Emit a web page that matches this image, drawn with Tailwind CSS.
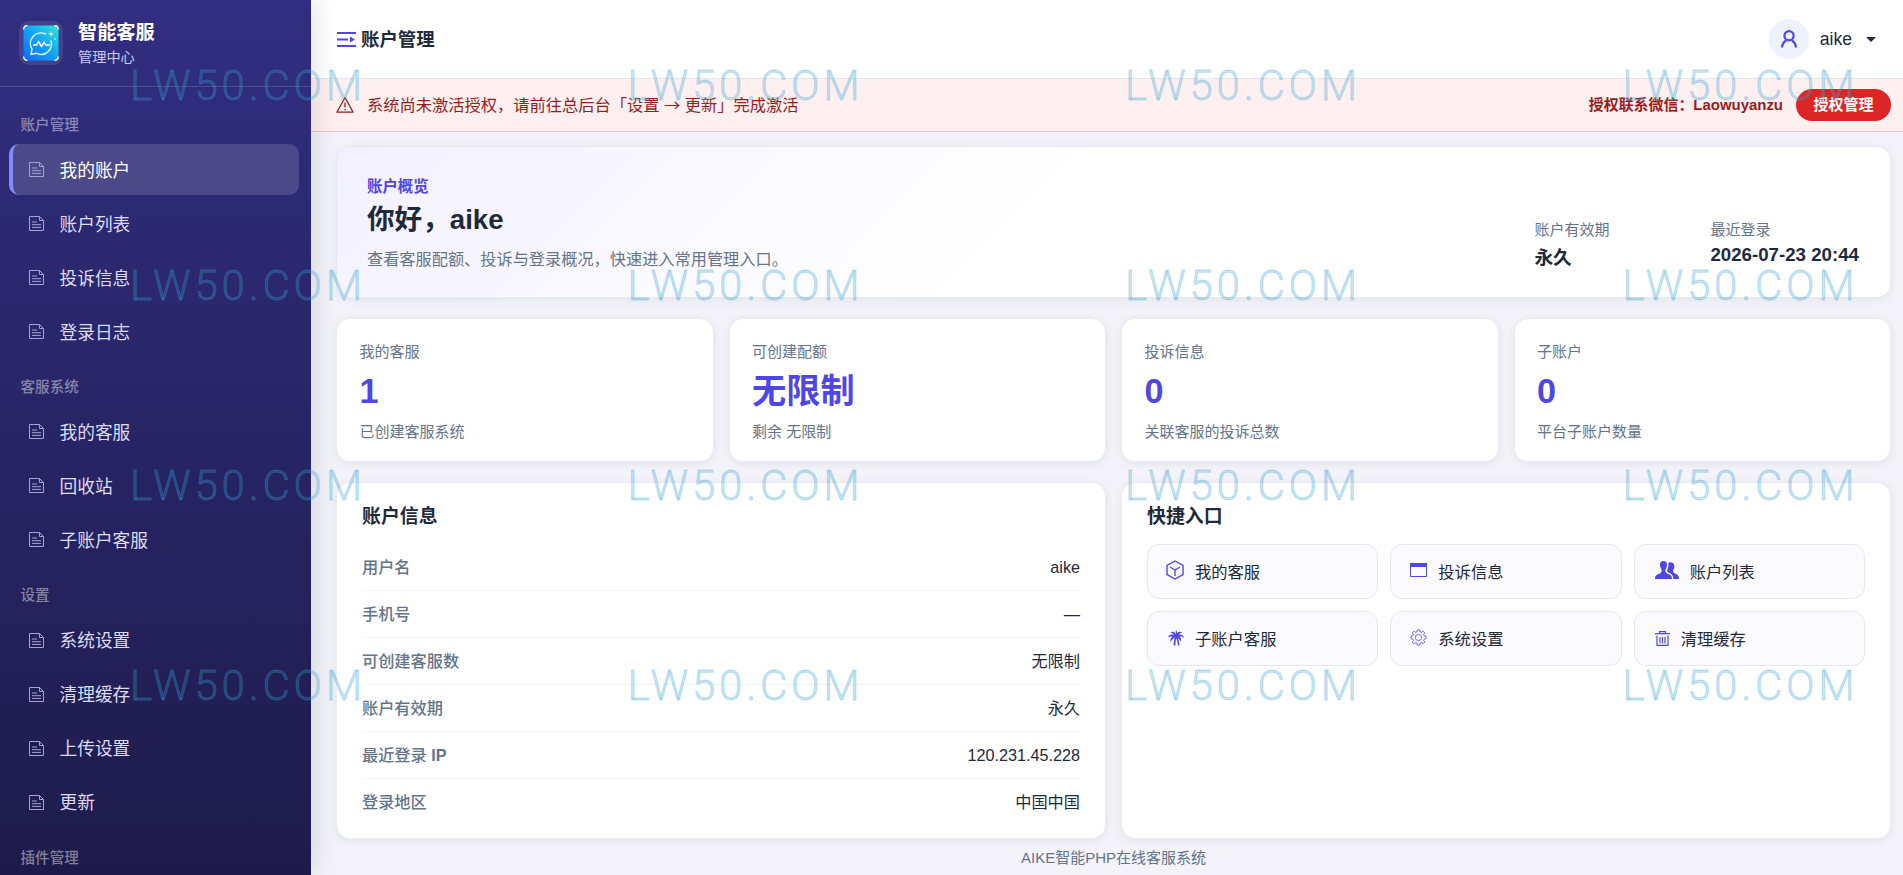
<!DOCTYPE html>
<html lang="zh-CN">
<head>
	<meta charset="UTF-8" />
	<title>账户管理</title>
	<script src="https://cdn.jsdelivr.net/npm/@tailwindcss/browser@4"></script>
</head>
<body class="relative flex h-[875px] w-[1903px] overflow-hidden bg-[#f3f3f9] font-['Liberation_Sans','Noto_Sans_CJK_SC',sans-serif] text-[16px] leading-6 text-[#1e293b]">

	<!-- Icons used more than once -->
	<svg class="hidden">
		<symbol id="doc" viewBox="0 0 15 15">
			<path d="M10.500.500H.5v14h14v-10zM10.500.500v4h4M3 6h5M3 8.700h9M3 11.400h9" fill="none" stroke="currentColor" />
		</symbol>
	</svg>

	<!-- Sidebar -->
	<aside class="relative z-10 h-full w-[311px] shrink-0 bg-gradient-to-b from-[#312e81] to-[#1e1b4b] shadow-[4px_0_24px_rgba(15,23,42,0.12)]">
		<div class="flex h-[87px] items-center gap-[15px] border-b border-white/15 pl-[19px]">
			<div class="flex size-11 items-center justify-center rounded-[10px] bg-white/10">
				<svg class="size-9" viewBox="0 0 36 36">
					<defs>
						<linearGradient id="logo" x1="0" y1="1" x2="1" y2="0">
							<stop offset="0" stop-color="#1268f5" />
							<stop offset="0.5" stop-color="#10a3f5" />
							<stop offset="1" stop-color="#2ce8d8" />
						</linearGradient>
					</defs>
					<rect x="0.5" y="0.5" width="35" height="35" rx="4.500" fill="url(#logo)" />
					<path d="M.7 4.500Q.7.7 4.500.7M31.500.7q3.800 0 3.800 3.800M35.300 31.500q0 3.800-3.800 3.800M4.500 35.300Q.7 35.300.7 31.500" fill="none" stroke="#fff" stroke-width="1.300" />
					<path d="M22.500 9A10.500 10.500 0 0 0 9 24l-1 5.500 5-1.300A10.500 10.500 0 0 0 28 16" fill="none" stroke="#d9f6ff" stroke-width="1.500" stroke-linecap="round" stroke-linejoin="round" />
					<path d="M10.500 20h3l2-3.500 3 5 2.500-4.500 1.500 3h4" fill="none" stroke="#fff" stroke-width="1.500" stroke-linecap="round" stroke-linejoin="round" />
					<path d="M28 6l.7 2.300L31 9l-2.300.7L28 12l-.7-2.300L25 9l2.300-.7z" fill="#fff" />
					<circle cx="32" cy="14" r=".8" fill="#fff" />
				</svg>
			</div>
			<div class="pt-[3px]">
				<p class="text-[19.200px] font-bold leading-6 text-white">智能客服</p>
				<p class="text-[14.200px] leading-6 text-[#c7c9f0]">管理中心</p>
			</div>
		</div>

		<nav id="menu" class="pl-[9px] pr-3"></nav>
	</aside>

	<!-- Main -->
	<main class="flex min-w-0 flex-1 flex-col">
		<header class="flex h-[79px] shrink-0 items-center justify-between border-b border-[#e2e8f0] bg-white pl-[26px] pr-[27px]">
			<div class="flex items-center gap-[5px]">
				<svg class="h-[17px] w-[19px] text-[#4f46e5]" viewBox="0 0 19 17">
					<path d="M0 2h19M0 8.500h11M0 15h19" stroke="currentColor" stroke-width="2.200" />
					<path d="M13 5.500v6l5-3z" fill="currentColor" />
				</svg>
				<h1 class="pt-0.5 text-[18.400px] font-bold">账户管理</h1>
			</div>
			<div class="flex items-center">
				<span class="flex size-10 items-center justify-center rounded-full bg-[#eef2ff]">
					<svg class="h-[18px] w-4 text-[#4f46e5]" viewBox="0 0 16 18" fill="none" stroke="currentColor" stroke-width="2.200">
						<circle cx="8" cy="5.800" r="4.600" />
						<path d="M1.100 17.500c0-3 1.600-5.500 4-7M14.900 17.500c0-3-1.600-5.500-4-7" />
					</svg>
				</span>
				<span class="ml-[11px] text-[17.600px]">aike</span>
				<span class="ml-[14px] border-x-[5px] border-t-[5px] border-x-transparent border-t-[#1e293b]"></span>
			</div>
		</header>

		<div class="flex h-[53px] shrink-0 items-center border-b border-[#f3c2c8] bg-[#fef0f0] pl-[25px] pr-3">
			<svg class="size-[18px] text-[#991b1b]" viewBox="0 0 18 18" fill="none" stroke="currentColor" stroke-width="1.300" stroke-linejoin="round">
				<path d="M9 1.500L.9 16.200h16.200zM9 6.500v5M9 13v1.300" />
			</svg>
			<p class="ml-[13px] text-[16.250px] leading-6 text-[#991b1b]">系统尚未激活授权，请前往总后台「设置 <span class="font-['Noto_Sans_CJK_SC'] leading-none">→</span> 更新」完成激活</p>
			<p class="ml-auto text-[14.950px] font-bold text-[#991b1b]">授权联系微信：Laowuyanzu</p>
			<button class="ml-[13px] h-8 w-[95px] rounded-full bg-[#dc2626] text-[15px] font-bold text-white">授权管理</button>
		</div>

		<div class="flex flex-1 flex-col pl-[25px] pr-3 pt-[14px]">
			<!-- Overview -->
			<section class="flex h-[152px] items-end justify-between rounded-[14px] border border-[#e8e8f1] bg-linear-135 from-[#f3f1ff] to-white to-45% pb-[25px] pl-[30px] pr-[31px] shadow-[0_2px_10px_rgba(15,23,42,0.07)]">
				<div>
					<p class="text-[15.400px] font-bold leading-6 text-[#4f46e5]">账户概览</p>
					<h2 class="pt-0.5 text-[27.600px] font-bold leading-[38px]">你好，aike</h2>
					<p class="pb-px pt-2 text-[16.200px] leading-6 text-[#64748b]">查看客服配额、投诉与登录概况，快速进入常用管理入口。</p>
				</div>
				<div class="flex gap-[101px]">
					<div>
						<p class="text-[15px] leading-6 text-[#64748b]">账户有效期</p>
						<p class="pt-px text-[18.700px] font-bold leading-[29px]">永久</p>
					</div>
					<div>
						<p class="text-[15px] leading-6 text-[#64748b]">最近登录</p>
						<p class="text-[18.700px] font-bold leading-[26px]">2026-07-23 20:44</p>
					</div>
				</div>
			</section>

			<!-- Counters -->
			<section id="counters" class="mt-5 grid grid-cols-4 gap-[15px]"></section>

			<section class="mt-5 grid h-[357px] grid-cols-2 gap-[15px]">
				<div class="rounded-[14px] border border-[#ececf3] bg-white px-[25px] pt-5 shadow-[0_2px_10px_rgba(15,23,42,0.07)]">
					<h3 class="text-[18.900px] font-bold leading-7">账户信息</h3>
					<dl id="info" class="pt-[13px]"></dl>
				</div>
				<div class="rounded-[14px] border border-[#ececf3] bg-white px-[25px] pt-5 shadow-[0_2px_10px_rgba(15,23,42,0.07)]">
					<h3 class="text-[18.900px] font-bold leading-7">快捷入口</h3>
					<div class="grid grid-cols-3 gap-x-3 gap-y-3 pt-[13px] text-[16.300px]">
						<a class="flex h-[55px] items-center gap-[11px] rounded-xl border border-[#e6e8f0] bg-[#fbfbff] pl-[18px]">
							<svg class="mb-[3px] h-5 w-[18px] text-[#4f46e5]" viewBox="0 0 18 20" fill="none" stroke="currentColor" stroke-width="1.400">
								<path d="M9 1l8 4.500v9L9 19l-8-4.500v-9zM4 7l5 3 5-3M9 10v6" />
							</svg>
							我的客服
						</a>
						<a class="flex h-[55px] items-center gap-[11px] rounded-xl border border-[#e6e8f0] bg-[#fbfbff] pl-[19px]">
							<svg class="mb-[3px] h-[14px] w-[17px] text-[#4f46e5]" viewBox="0 0 17 14">
								<path d="M0 0h17v4H0z" fill="currentColor" />
								<path d="M.5 4v9.500h16V4" fill="none" stroke="currentColor" />
							</svg>
							投诉信息
						</a>
						<a class="flex h-[55px] items-center gap-3 rounded-xl border border-[#e6e8f0] bg-[#fbfbff] pl-5">
							<svg class="mb-1 h-[18px] w-6 text-[#4f46e5]" viewBox="0 0 24 18" fill="currentColor">
								<path d="M8.500 0C6 0 4.800 1.800 5 4.300c.2 2.400 1.500 3.700 1.700 5.200.1 1.700-1 2.500-2.700 3.200C1.500 13.800 0 14.500 0 18h17c0-3.500-1.500-4.200-4-5.300-1.700-.7-2.800-1.500-2.700-3.200.2-1.500 1.500-2.800 1.700-5.200C12.200 1.800 11 0 8.500 0z" />
								<path d="M13.200 2c.6 1.800.2 4.500-.9 6.700-.6 1.200-.1 2.300 1.700 3 2.800 1.300 4.200 2.800 4.400 6.300H24c0-3.300-1.300-4.200-3.500-5.200-1.500-.7-2.800-1.500-2.500-3 .3-1.400 1.300-2.300 1.400-4.600C19.500 1.700 15.500.4 13.200 2z" />
							</svg>
							<span class="-ml-px">账户列表</span>
						</a>
						<a class="flex h-[55px] items-center gap-[11px] rounded-xl border border-[#e6e8f0] bg-[#fbfbff] pl-[20px]">
							<svg class="mb-0.5 size-4 text-[#4f46e5]" viewBox="0 0 16 16" fill="currentColor">
								<path d="M8 4.500C6.800 2 4.500 1 2.500 2.700 4.300 2.800 5.300 3.700 5.800 4.900 3 4 .7 5 0 7.500c1.500-1 3-1.300 4.800-.9C2.800 7.800 2 9.500 2.600 12 3.700 10 5 8.700 6.900 7.700 5.900 10 5.500 12.500 5.700 15.500h1.800C7.300 13 7.700 10.500 8.300 8.600c.9 2 1.500 4.400 1.500 6.900h1.600c.1-2.500-.6-5-1.700-7.200 1.500.9 2.600 2 3.300 3.700C13.500 9.500 13 7.800 11.400 6.600c1.600-.1 3 .2 4.600 1.400-.5-2.500-2.500-4-5.200-3.500.6-1 1.600-1.500 3.500-1.500C12.500 1.200 9.700 1.500 9 3.600L8.800.5 7.600 1z" />
							</svg>
							子账户客服
						</a>
						<a class="flex h-[55px] items-center gap-[11px] rounded-xl border border-[#e6e8f0] bg-[#fbfbff] pl-[19px]">
							<svg class="mb-0.5 size-[17px] text-[#4f46e5]/90" viewBox="0 0 18 19" fill="none" stroke="currentColor">
								<path d="M7.600 1h2.800l.5 2.300 1.200.5 2-1.300 1.900 1.900-1.300 2 .5 1.200 2.300.5v2.800l-2.300.5-.5 1.200 1.300 2-1.900 1.900-2-1.300-1.200.5-.5 2.300H7.600l-.5-2.300-1.200-.5-2 1.300L2 14.600l1.300-2-.5-1.200L.5 10.900V8.100l2.300-.5.5-1.200L2 4.400l1.900-1.900 2 1.300 1.200-.5z" />
								<circle cx="9" cy="9.500" r="3.500" />
							</svg>
							系统设置
						</a>
						<a class="flex h-[55px] items-center gap-3 rounded-xl border border-[#e6e8f0] bg-[#fbfbff] pl-5">
							<svg class="h-[15px] w-[15px] text-[#4f46e5]" viewBox="0 0 15 15" fill="none" stroke="currentColor" stroke-width="1.200">
								<path d="M0 2.600h15M4.500 2.600V.6h6v2M2 4.500v9.900h11V4.500M5 6v6.500M7.500 6v6.500M10 6v6.500" />
							</svg>
							<span class="-ml-px">清理缓存</span>
						</a>
					</div>
				</div>
			</section>

			<footer class="pt-[7px] text-center text-[15px] leading-6 text-[#64748b]">AIKE智能PHP在线客服系统</footer>
		</div>
	</main>

	<!-- Watermark -->
	<div id="watermark" class="pointer-events-none absolute left-[130px] top-[61px] z-20 grid grid-cols-[repeat(3,497.500px)_auto] auto-rows-[200px] font-[Roboto] text-[42px] font-light leading-[50px] tracking-[3.800px] text-[#36a3d6]/30 [-webkit-text-stroke:0.8px]"></div>

	<script>
		const menu = [
			["账户管理", ["我的账户", "账户列表", "投诉信息", "登录日志"]],
			["客服系统", ["我的客服", "回收站", "子账户客服"]],
			["设置", ["系统设置", "清理缓存", "上传设置", "更新"]],
			["插件管理", []]
		]

		let menuHtml = ""
		menu.forEach(([title, items], i) => {
			const space = i == 0 ? "h-[57px] pt-[26px]" : "h-[47.400px] pt-4"
			menuHtml += `<p class="${space} pl-[11.500px] text-[14.600px] font-medium leading-6 text-white/45">${title}</p>`
			menuHtml += `<ul class="flex flex-col gap-[3px] pb-0.5">`
			items.forEach((item, j) => {
				const active = i == 0 && j == 0
				const state = active ? "border-[#818cf8] bg-white/15 text-white" : "border-transparent text-[#dcdcf5]"
				menuHtml += `
				<li class="flex h-[51px] items-center rounded-[10px] border-l-4 pl-4 ${state}">
					<svg class="size-[15px] text-[#a5a3d3]"><use href="#doc" /></svg>
					<span class="ml-[15.500px] pt-0.5 text-[17.700px]">${item}</span>
				</li>`
			})
			menuHtml += `</ul>`
		})
		document.getElementById("menu").innerHTML = menuHtml

		const counters = [
			["我的客服", "1", "已创建客服系统"],
			["可创建配额", "无限制", "剩余 无限制"],
			["投诉信息", "0", "关联客服的投诉总数"],
			["子账户", "0", "平台子账户数量"]
		]
		document.getElementById("counters").innerHTML = counters.map(([label, value, note]) => `
			<div class="h-[144px] rounded-[14px] border border-[#ececf3] bg-white pl-[22.500px] pt-[21px] shadow-[0_2px_10px_rgba(15,23,42,0.07)]">
				<p class="text-[15px] leading-6 text-[#64748b]">${label}</p>
				<p class="pb-[5px] pt-[3px] text-[34.200px] font-bold leading-[48px] text-[#4f46e5]">${value}</p>
				<p class="text-[15px] leading-6 text-[#64748b]">${note}</p>
			</div>`).join("")

		const info = [
			["用户名", "aike"],
			["手机号", "—"],
			["可创建客服数", "无限制"],
			["账户有效期", "永久"],
			["最近登录 <b>IP</b>", "120.231.45.228"],
			["登录地区", "中国中国"]
		]
		document.getElementById("info").innerHTML = info.map(([key, value]) => `
			<div class="flex h-[47px] items-center justify-between border-b border-[#f4f5f9] pb-px last:border-0">
				<dt class="text-[16.200px] font-medium text-[#64748b]">${key}</dt>
				<dd class="text-[16.200px]">${value}</dd>
			</div>`).join("")

		document.getElementById("watermark").innerHTML = "<span>LW50.COM</span>".repeat(16)
	</script>
</body>
</html>
